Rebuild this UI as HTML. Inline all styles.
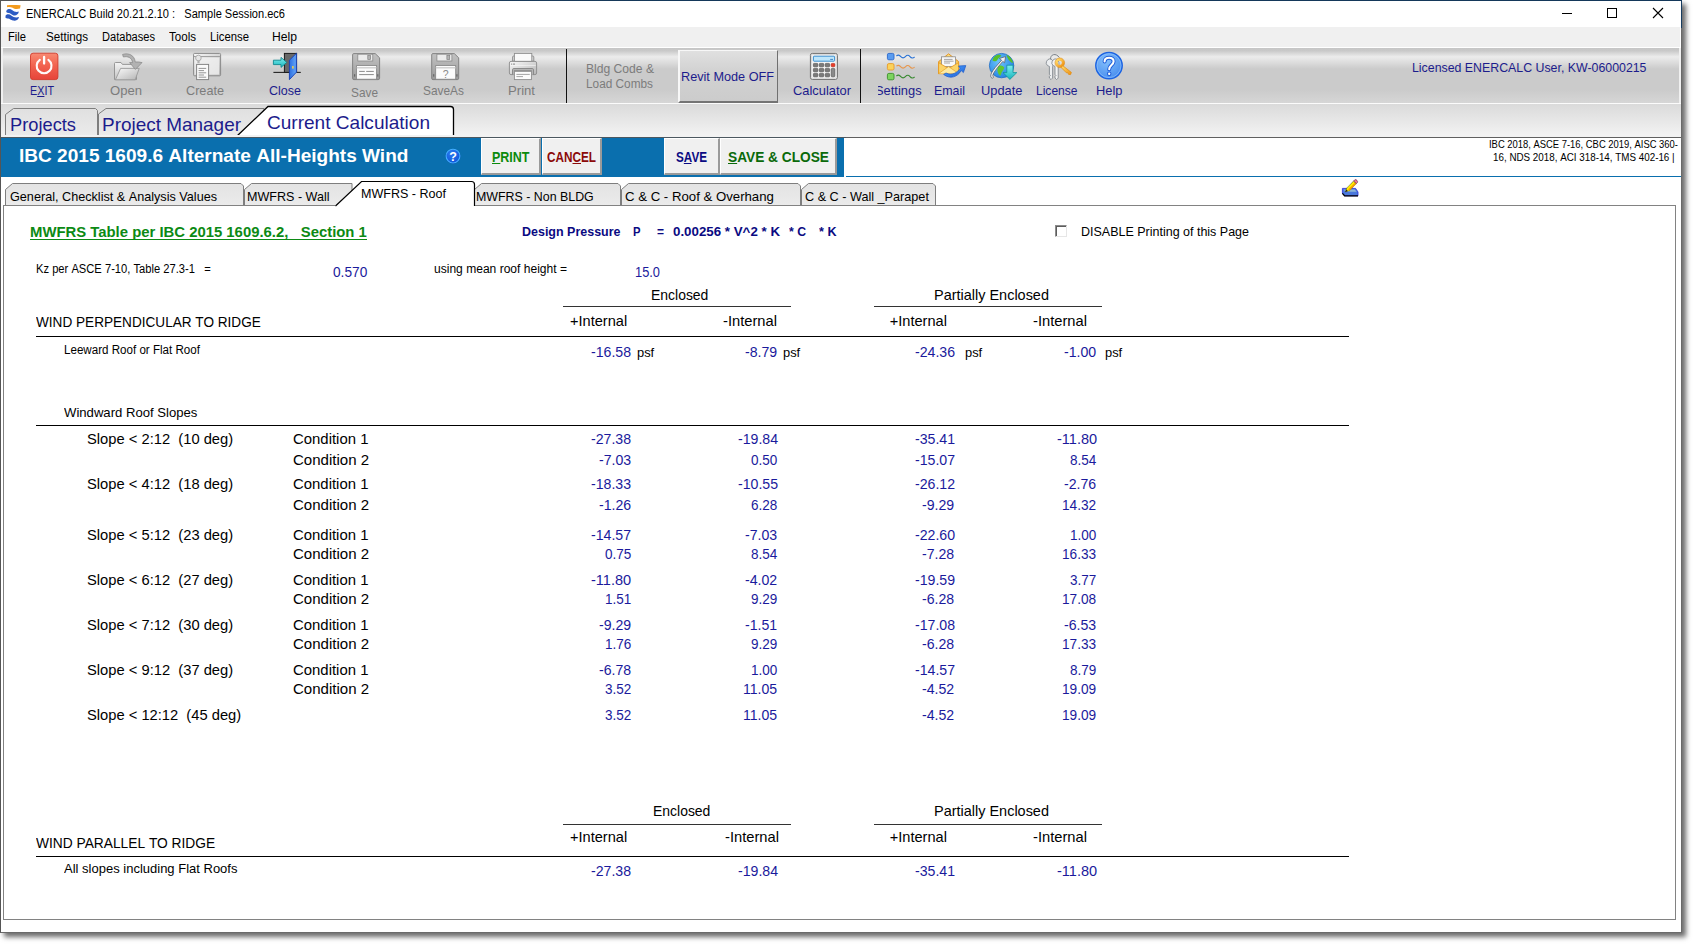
<!DOCTYPE html>
<html><head><meta charset="utf-8"><title>ENERCALC</title>
<style>
html,body{margin:0;padding:0;}
body{width:1697px;height:948px;overflow:hidden;background:#fff;position:relative;font-family:"Liberation Sans",sans-serif;}
.t{position:absolute;white-space:nowrap;line-height:1;transform-origin:0 50%;display:block;}
.t u{text-decoration:underline;text-underline-offset:1px;}
.b{position:absolute;box-sizing:border-box;}
svg{position:absolute;overflow:visible;}

</style></head>
<body>
<div class="b" style="left:0px;top:0px;width:1682px;height:933px;background:#fff;border:1px solid #555;border-right-color:#6a6a6a;border-bottom-color:#6a6a6a;box-shadow:4px 4px 5px rgba(0,0,0,.58);"></div>
<div class="b" style="left:1681px;top:0px;width:1px;height:28px;background:#163c60;"></div>
<div class="b" style="left:0;top:0;width:1682px;height:1px;background:linear-gradient(90deg,#555 0%,#2a4058 12%,#14385a 40%,#14385a 100%);"></div>
<span class="t" style="left:25.80px;top:7.75px;font-size:12.5px;color:#000;transform:scaleX(0.8833);">ENERCALC&nbsp;Build&nbsp;20.21.2.10&nbsp;:&nbsp;&nbsp;&nbsp;Sample&nbsp;Session.ec6</span>
<svg style="left:1555px;top:3px" width="120" height="22" viewBox="0 0 120 22"><path d="M7 10.5h10" stroke="#000" stroke-width="1" fill="none"/><rect x="52.5" y="5.5" width="9" height="9" stroke="#000" stroke-width="1" fill="none"/><path d="M98 5l10 10M108 5l-10 10" stroke="#000" stroke-width="1.1" fill="none"/></svg>
<div class="b" style="left:1px;top:27px;width:1679px;height:20px;background:#f0f0f0;"></div>
<div class="b" style="left:1px;top:47px;width:1680px;height:1px;background:#fff;"></div>
<span class="t" style="left:8.00px;top:30.75px;font-size:12.5px;color:#000;transform:scaleX(0.8936);">File</span>
<span class="t" style="left:46.00px;top:30.75px;font-size:12.5px;color:#000;transform:scaleX(0.9299);">Settings</span>
<span class="t" style="left:102.00px;top:30.75px;font-size:12.5px;color:#000;transform:scaleX(0.8869);">Databases</span>
<span class="t" style="left:169.00px;top:30.75px;font-size:12.5px;color:#000;transform:scaleX(0.9252);">Tools</span>
<span class="t" style="left:210.00px;top:30.75px;font-size:12.5px;color:#000;transform:scaleX(0.9052);">License</span>
<span class="t" style="left:272.00px;top:30.75px;font-size:12.5px;color:#000;transform:scaleX(0.9724);">Help</span>
<div class="b" style="left:1px;top:48px;width:1680px;height:55px;background:#f0f0f0;"></div>
<div class="b" style="left:3px;top:48px;width:1676px;height:55px;background:linear-gradient(#c6c6c6 0%,#c9c9c9 5%,#ececec 16%,#cbcbcb 38%,#cbcbcb 76%,#d6d6d6 100%);"></div>
<div class="b" style="left:1px;top:103px;width:1680px;height:1px;background:#fbfbfb;"></div>
<div class="b" style="left:1px;top:104px;width:1680px;height:33px;background:linear-gradient(#dadada,#f4f4f4);"></div>
<div class="b" style="left:1px;top:137px;width:1680px;height:1px;background:#606060;"></div>
<span class="t" style="left:30.00px;top:83.75px;font-size:13.5px;color:#1c1c8c;transform:scaleX(0.7998);">E<u>X</u>IT</span>
<span class="t" style="left:110.00px;top:83.75px;font-size:13.5px;color:#7c7c7c;transform:scaleX(0.9690);">Open</span>
<span class="t" style="left:186.00px;top:83.75px;font-size:13.5px;color:#7c7c7c;transform:scaleX(0.9378);">Create</span>
<span class="t" style="left:269.00px;top:83.75px;font-size:13.5px;color:#1c1c8c;transform:scaleX(0.9271);">Close</span>
<span class="t" style="left:351.00px;top:85.75px;font-size:13.5px;color:#7c7c7c;transform:scaleX(0.8774);">Save</span>
<span class="t" style="left:423.00px;top:83.75px;font-size:13.5px;color:#7c7c7c;transform:scaleX(0.8812);">SaveAs</span>
<span class="t" style="left:508.00px;top:83.75px;font-size:13.5px;color:#7c7c7c;transform:scaleX(0.9726);">Print</span>
<div class="b" style="left:566px;top:49px;width:1px;height:54px;background:#111;"></div>
<span class="t" style="left:586.00px;top:62.75px;font-size:12.5px;color:#7c7c7c;transform:scaleX(0.9688);">Bldg&nbsp;Code&nbsp;&amp;</span>
<span class="t" style="left:586.00px;top:77.75px;font-size:12.5px;color:#7c7c7c;transform:scaleX(0.9453);">Load&nbsp;Combs</span>
<div class="b" style="left:678px;top:50px;width:100px;height:53px;background:linear-gradient(#e0e0e0,#d2d2d2 40%,#cccccc);border-top:1px solid #f7f7f7;border-left:2px solid #f7f7f7;border-right:1px solid #707070;border-bottom:2px solid #747474;"></div>
<span class="t" style="left:681.00px;top:69.75px;font-size:13.5px;color:#1c1c8c;transform:scaleX(0.9392);">Revit&nbsp;Mode&nbsp;OFF</span>
<span class="t" style="left:793.00px;top:83.75px;font-size:13.5px;color:#1c1c8c;transform:scaleX(0.9543);">Calculator</span>
<div class="b" style="left:860px;top:49px;width:1px;height:54px;background:#111;"></div>
<div class="b" style="left:878px;top:82px;width:50px;height:20px;overflow:hidden;"><span class="t" style="left:-3px;top:2.2px;font-size:13.5px;color:#1c1c8c;transform:scaleX(0.955)">Settings</span></div>
<span class="t" style="left:934.00px;top:83.75px;font-size:13.5px;color:#1c1c8c;transform:scaleX(0.9183);">Email</span>
<span class="t" style="left:980.50px;top:83.75px;font-size:13.5px;color:#1c1c8c;transform:scaleX(0.9533);">Update</span>
<span class="t" style="left:1036.00px;top:83.75px;font-size:13.5px;color:#1c1c8c;transform:scaleX(0.8918);">License</span>
<span class="t" style="left:1095.50px;top:83.75px;font-size:13.5px;color:#1c1c8c;transform:scaleX(0.9544);">Help</span>
<span class="t" style="left:1412.00px;top:60.75px;font-size:13.5px;color:#1c1c8c;transform:scaleX(0.9146);">Licensed&nbsp;ENERCALC&nbsp;User,&nbsp;KW-06000215</span>
<svg style="left:0;top:104px" width="470" height="31" viewBox="0 104 470 31"><defs><linearGradient id="tg" x1="0" y1="0" x2="0" y2="1"><stop offset="0" stop-color="#e0e0e0"/><stop offset="1" stop-color="#ebebeb"/></linearGradient></defs><path d="M5.5 136V114.500L13.500 108.500H95.500L97.500 110.500V136" fill="url(#tg)" stroke="#7e7e7e" stroke-width="1"/><path d="M98.500 136V114L106 108.500H264V136" fill="url(#tg)" stroke="#7e7e7e" stroke-width="1"/><path d="M237 136L268 106.500H450.500Q453.500 106.500 453.500 109.500V136Z" fill="#fff" stroke="none"/><path d="M237 136L268 106.500H450.500Q453.500 106.500 453.500 109.500V136" fill="none" stroke="#000" stroke-width="1.300"/></svg>
<div class="b" style="left:0;top:104px;width:470px;height:31px;overflow:hidden;">
<span class="t" style="left:10.00px;top:11.75px;font-size:18.5px;color:#1c1c8c;transform:scaleX(0.9876);">Projects</span>
<span class="t" style="left:102.00px;top:11.75px;font-size:18.5px;color:#1c1c8c;transform:scaleX(1.0240);">Project&nbsp;Manager</span>
<span class="t" style="left:266.50px;top:9.75px;font-size:18.5px;color:#1c1c8c;transform:scaleX(1.0293);">Current&nbsp;Calculation</span>
</div>
<div class="b" style="left:1px;top:135px;width:1680px;height:2px;background:#f2f2f2;"></div>
<div class="b" style="left:1px;top:138px;width:843px;height:39px;background:#0a6fae;"></div>
<div class="b" style="left:1px;top:137px;width:845px;height:1px;background:#4c5860;"></div>
<div class="b" style="left:846px;top:176px;width:835px;height:1px;background:#0a6fae;"></div>
<span class="t" style="left:19.00px;top:148.25px;font-size:17.5px;color:#fff;font-weight:bold;transform:scaleX(1.0886);">IBC&nbsp;2015&nbsp;1609.6&nbsp;Alternate&nbsp;All-Heights&nbsp;Wind</span>
<svg style="left:444px;top:147px" width="18" height="18" viewBox="0 0 18 18"><defs><radialGradient id="hq" cx="0.4" cy="0.3" r="0.8"><stop offset="0" stop-color="#2a7cf0"/><stop offset="1" stop-color="#0c50d8"/></radialGradient></defs><circle cx="9" cy="9.4" r="7.3" fill="#0a2fb0"/><circle cx="9" cy="9.1" r="6.9" fill="url(#hq)" stroke="#44b2ff" stroke-width="1.1"/><text x="9" y="13.6" font-family="Liberation Sans" font-weight="bold" font-size="12.5" fill="#fff" text-anchor="middle">?</text></svg>
<div class="b" style="left:481px;top:138px;width:59.5px;height:37px;background:#f0f0f0;border-top:1px solid #fff;border-left:1px solid #fff;border-right:2px solid #9a9a9a;border-bottom:2px solid #9a9a9a;"></div>
<span class="t" style="left:492.00px;top:150.30px;font-size:14px;color:#0c8a0c;font-weight:bold;transform:scaleX(0.8928);"><u>P</u>RINT</span>
<div class="b" style="left:542px;top:138px;width:60px;height:37px;background:#f0f0f0;border-top:1px solid #fff;border-left:1px solid #fff;border-right:2px solid #9a9a9a;border-bottom:2px solid #9a9a9a;"></div>
<span class="t" style="left:547.00px;top:150.30px;font-size:14px;color:#8c0a0a;font-weight:bold;transform:scaleX(0.8400);">CAN<u>C</u>EL</span>
<div class="b" style="left:664px;top:138px;width:55.5px;height:37px;background:#f0f0f0;border-top:1px solid #fff;border-left:1px solid #fff;border-right:2px solid #9a9a9a;border-bottom:2px solid #9a9a9a;"></div>
<span class="t" style="left:676.00px;top:150.30px;font-size:14px;color:#0a0a82;font-weight:bold;transform:scaleX(0.8359);">S<u>A</u>VE</span>
<div class="b" style="left:720px;top:138px;width:117px;height:37px;background:#f0f0f0;border-top:1px solid #fff;border-left:1px solid #fff;border-right:2px solid #9a9a9a;border-bottom:2px solid #9a9a9a;"></div>
<span class="t" style="left:728.00px;top:150.30px;font-size:14px;color:#0a6a0a;font-weight:bold;transform:scaleX(0.9786);"><u>S</u>AVE&nbsp;&amp;&nbsp;CLOSE</span>
<span class="t" style="left:1489.00px;top:138.70px;font-size:10.6px;color:#000;transform:scaleX(0.8887);">IBC&nbsp;2018,&nbsp;ASCE&nbsp;7-16,&nbsp;CBC&nbsp;2019,&nbsp;AISC&nbsp;360-</span>
<span class="t" style="left:1492.50px;top:151.70px;font-size:10.6px;color:#000;transform:scaleX(0.9271);">16,&nbsp;NDS&nbsp;2018,&nbsp;ACI&nbsp;318-14,&nbsp;TMS&nbsp;402-16&nbsp;|</span>
<svg style="left:0;top:178px" width="960" height="28" viewBox="0 178 960 28"><defs><linearGradient id="sg" x1="0" y1="0" x2="0" y2="1"><stop offset="0" stop-color="#e3e3e3"/><stop offset="1" stop-color="#ebebeb"/></linearGradient></defs><path d="M5.5 206V189.500L12.5 183.500H241.0L243.5 186V206" fill="url(#sg)" stroke="#7e7e7e"/><path d="M244.5 206V189.500L251.5 183.500H352V206" fill="url(#sg)" stroke="#7e7e7e"/><path d="M474.5 206V189.500L481.5 183.500H618.0L620.5 186V206" fill="url(#sg)" stroke="#7e7e7e"/><path d="M621.5 206V189.500L628.5 183.500H798.0L800.5 186V206" fill="url(#sg)" stroke="#7e7e7e"/><path d="M801.5 206V189.500L808.5 183.500H933.0L935.5 186V206" fill="url(#sg)" stroke="#7e7e7e"/><path d="M335.500 206.500L361.500 181.500H471.500Q474.500 181.500 474.500 184.500V206.500Z" fill="#fff"/><path d="M335.500 206L361.500 181.500H471.500Q474.500 181.500 474.500 184.500V206" fill="none" stroke="#000" stroke-width="1.200"/></svg>
<span class="t" style="left:9.70px;top:190.80px;font-size:12.4px;color:#000;transform:scaleX(1.0203);">General,&nbsp;Checklist&nbsp;&amp;&nbsp;Analysis&nbsp;Values</span>
<span class="t" style="left:247.30px;top:190.80px;font-size:12.4px;color:#000;transform:scaleX(1.0134);">MWFRS&nbsp;-&nbsp;Wall</span>
<span class="t" style="left:360.50px;top:188.30px;font-size:12.4px;color:#000;transform:scaleX(1.0113);">MWFRS&nbsp;-&nbsp;Roof</span>
<span class="t" style="left:476.00px;top:190.80px;font-size:12.4px;color:#000;">MWFRS&nbsp;-&nbsp;Non&nbsp;BLDG</span>
<span class="t" style="left:624.50px;top:190.80px;font-size:12.4px;color:#000;transform:scaleX(1.0650);">C&nbsp;&amp;&nbsp;C&nbsp;-&nbsp;Roof&nbsp;&amp;&nbsp;Overhang</span>
<span class="t" style="left:804.50px;top:190.80px;font-size:12.4px;color:#000;transform:scaleX(1.0205);">C&nbsp;&amp;&nbsp;C&nbsp;-&nbsp;Wall&nbsp;_Parapet</span>
<div class="b" style="left:3px;top:205px;width:1673px;height:715px;border:1px solid #828282;border-top:none;background:transparent;"></div>
<div class="b" style="left:3px;top:205px;width:332px;height:1px;background:#828282;"></div>
<div class="b" style="left:475px;top:205px;width:1201px;height:1px;background:#828282;"></div>
<span class="t" style="left:29.50px;top:225.20px;font-size:14.6px;color:#0c8a14;font-weight:bold;transform:scaleX(1.0188);">MWFRS&nbsp;Table&nbsp;per&nbsp;IBC&nbsp;2015&nbsp;1609.6.2,&nbsp;&nbsp;&nbsp;Section&nbsp;1</span>
<div class="b" style="left:29.5px;top:239px;width:337.0px;height:1px;background:#0c8a14;"></div>
<span class="t" style="left:521.50px;top:224.50px;font-size:13px;color:#0a0a82;font-weight:bold;transform:scaleX(0.9600);">Design&nbsp;Pressure</span>
<span class="t" style="left:633.00px;top:224.50px;font-size:13px;color:#0a0a82;font-weight:bold;transform:scaleX(0.8649);">P</span>
<span class="t" style="left:657.00px;top:224.50px;font-size:13px;color:#0a0a82;font-weight:bold;transform:scaleX(0.9220);">=</span>
<span class="t" style="left:673.00px;top:224.50px;font-size:13px;color:#0a0a82;font-weight:bold;transform:scaleX(1.0245);">0.00256&nbsp;*&nbsp;V^2&nbsp;*&nbsp;K</span>
<span class="t" style="left:789.00px;top:224.50px;font-size:13px;color:#0a0a82;font-weight:bold;transform:scaleX(0.9414);">*&nbsp;C</span>
<span class="t" style="left:818.50px;top:224.50px;font-size:13px;color:#0a0a82;font-weight:bold;transform:scaleX(0.9691);">*&nbsp;K</span>
<div class="b" style="left:1055px;top:225px;width:12px;height:12px;background:#fff;border-top:1px solid #8c8c8c;border-left:1px solid #8c8c8c;border-right:1px solid #e6e6e6;border-bottom:1px solid #e6e6e6;"></div>
<div class="b" style="left:1056px;top:226px;width:10px;height:10px;border-top:1px solid #5c5c5c;border-left:1px solid #5c5c5c;"></div>
<span class="t" style="left:1081.00px;top:225.00px;font-size:13px;color:#000;transform:scaleX(0.9607);">DISABLE&nbsp;Printing&nbsp;of&nbsp;this&nbsp;Page</span>
<span class="t" style="left:36.00px;top:263.00px;font-size:12px;color:#000;transform:scaleX(0.9310);">Kz&nbsp;per&nbsp;ASCE&nbsp;7-10,&nbsp;Table&nbsp;27.3-1&nbsp;&nbsp;&nbsp;=</span>
<span class="t" style="left:332.50px;top:264.50px;font-size:14.6px;color:#1a1a9c;transform:scaleX(0.9388);">0.570</span>
<span class="t" style="left:433.50px;top:263.00px;font-size:12px;color:#000;transform:scaleX(1.0043);">using&nbsp;mean&nbsp;roof&nbsp;height&nbsp;=</span>
<span class="t" style="left:634.50px;top:264.50px;font-size:14.6px;color:#1a1a9c;transform:scaleX(0.8798);">15.0</span>
<span class="t" style="left:650.50px;top:287.70px;font-size:14.6px;color:#000;transform:scaleX(0.9557);">Enclosed</span>
<span class="t" style="left:933.50px;top:287.70px;font-size:14.6px;color:#000;transform:scaleX(0.9910);">Partially&nbsp;Enclosed</span>
<div class="b" style="left:563px;top:306px;width:228px;height:1px;background:#333;"></div>
<div class="b" style="left:874px;top:306px;width:228px;height:1px;background:#333;"></div>
<span class="t" style="left:570.00px;top:313.70px;font-size:14.6px;color:#000;">+Internal</span>
<span class="t" style="left:723.00px;top:313.70px;font-size:14.6px;color:#000;transform:scaleX(1.0082);">-Internal</span>
<span class="t" style="left:889.70px;top:313.70px;font-size:14.6px;color:#000;">+Internal</span>
<span class="t" style="left:1033.00px;top:313.70px;font-size:14.6px;color:#000;transform:scaleX(1.0082);">-Internal</span>
<span class="t" style="left:36.00px;top:315.20px;font-size:14.6px;color:#000;transform:scaleX(0.9315);">WIND&nbsp;PERPENDICULAR&nbsp;TO&nbsp;RIDGE</span>
<div class="b" style="left:36px;top:336px;width:1313px;height:1px;background:#000;"></div>
<span class="t" style="left:64.00px;top:343.80px;font-size:12px;color:#000;transform:scaleX(0.9663);">Leeward&nbsp;Roof&nbsp;or&nbsp;Flat&nbsp;Roof</span>
<span class="t" style="left:590.70px;top:345.20px;font-size:14.6px;color:#1a1a9c;transform:scaleX(0.9686);">-16.58</span>
<span class="t" style="left:745.40px;top:345.20px;font-size:14.6px;color:#1a1a9c;transform:scaleX(0.9676);">-8.79</span>
<span class="t" style="left:914.50px;top:345.20px;font-size:14.6px;color:#1a1a9c;transform:scaleX(0.9686);">-24.36</span>
<span class="t" style="left:1064.40px;top:345.20px;font-size:14.6px;color:#1a1a9c;transform:scaleX(0.9676);">-1.00</span>
<span class="t" style="left:636.50px;top:347.20px;font-size:12.6px;color:#000;transform:scaleX(1.0233);">psf</span>
<span class="t" style="left:783.00px;top:347.20px;font-size:12.6px;color:#000;transform:scaleX(1.0233);">psf</span>
<span class="t" style="left:964.50px;top:347.20px;font-size:12.6px;color:#000;transform:scaleX(1.0233);">psf</span>
<span class="t" style="left:1104.50px;top:347.20px;font-size:12.6px;color:#000;transform:scaleX(1.0233);">psf</span>
<span class="t" style="left:64.00px;top:407.30px;font-size:12.4px;color:#000;transform:scaleX(1.0584);">Windward&nbsp;Roof&nbsp;Slopes</span>
<div class="b" style="left:36px;top:425px;width:1313px;height:1px;background:#000;"></div>
<span class="t" style="left:87.00px;top:431.90px;font-size:14.6px;color:#000;transform:scaleX(1.0090);">Slope&nbsp;&lt;&nbsp;2:12&nbsp;&nbsp;(10&nbsp;deg)</span>
<span class="t" style="left:293.20px;top:431.90px;font-size:14.6px;color:#000;transform:scaleX(1.0221);">Condition&nbsp;1</span>
<span class="t" style="left:590.70px;top:431.90px;font-size:14.6px;color:#1a1a9c;transform:scaleX(0.9686);">-27.38</span>
<span class="t" style="left:737.50px;top:431.90px;font-size:14.6px;color:#1a1a9c;transform:scaleX(0.9686);">-19.84</span>
<span class="t" style="left:914.50px;top:431.90px;font-size:14.6px;color:#1a1a9c;transform:scaleX(0.9686);">-35.41</span>
<span class="t" style="left:1056.50px;top:431.90px;font-size:14.6px;color:#1a1a9c;transform:scaleX(0.9947);">-11.80</span>
<span class="t" style="left:293.20px;top:452.90px;font-size:14.6px;color:#000;transform:scaleX(1.0316);">Condition&nbsp;2</span>
<span class="t" style="left:598.60px;top:452.90px;font-size:14.6px;color:#1a1a9c;transform:scaleX(0.9676);">-7.03</span>
<span class="t" style="left:751.30px;top:452.90px;font-size:14.6px;color:#1a1a9c;transform:scaleX(0.9255);">0.50</span>
<span class="t" style="left:914.50px;top:452.90px;font-size:14.6px;color:#1a1a9c;transform:scaleX(0.9686);">-15.07</span>
<span class="t" style="left:1070.30px;top:452.90px;font-size:14.6px;color:#1a1a9c;transform:scaleX(0.9255);">8.54</span>
<span class="t" style="left:87.00px;top:476.90px;font-size:14.6px;color:#000;transform:scaleX(1.0090);">Slope&nbsp;&lt;&nbsp;4:12&nbsp;&nbsp;(18&nbsp;deg)</span>
<span class="t" style="left:293.20px;top:476.90px;font-size:14.6px;color:#000;transform:scaleX(1.0221);">Condition&nbsp;1</span>
<span class="t" style="left:590.70px;top:476.90px;font-size:14.6px;color:#1a1a9c;transform:scaleX(0.9686);">-18.33</span>
<span class="t" style="left:737.50px;top:476.90px;font-size:14.6px;color:#1a1a9c;transform:scaleX(0.9686);">-10.55</span>
<span class="t" style="left:914.50px;top:476.90px;font-size:14.6px;color:#1a1a9c;transform:scaleX(0.9686);">-26.12</span>
<span class="t" style="left:1064.40px;top:476.90px;font-size:14.6px;color:#1a1a9c;transform:scaleX(0.9676);">-2.76</span>
<span class="t" style="left:293.20px;top:497.90px;font-size:14.6px;color:#000;transform:scaleX(1.0316);">Condition&nbsp;2</span>
<span class="t" style="left:598.60px;top:497.90px;font-size:14.6px;color:#1a1a9c;transform:scaleX(0.9676);">-1.26</span>
<span class="t" style="left:751.30px;top:497.90px;font-size:14.6px;color:#1a1a9c;transform:scaleX(0.9255);">6.28</span>
<span class="t" style="left:922.40px;top:497.90px;font-size:14.6px;color:#1a1a9c;transform:scaleX(0.9676);">-9.29</span>
<span class="t" style="left:1062.40px;top:497.90px;font-size:14.6px;color:#1a1a9c;transform:scaleX(0.9361);">14.32</span>
<span class="t" style="left:87.00px;top:527.90px;font-size:14.6px;color:#000;transform:scaleX(1.0090);">Slope&nbsp;&lt;&nbsp;5:12&nbsp;&nbsp;(23&nbsp;deg)</span>
<span class="t" style="left:293.20px;top:527.90px;font-size:14.6px;color:#000;transform:scaleX(1.0221);">Condition&nbsp;1</span>
<span class="t" style="left:590.70px;top:527.90px;font-size:14.6px;color:#1a1a9c;transform:scaleX(0.9686);">-14.57</span>
<span class="t" style="left:745.40px;top:527.90px;font-size:14.6px;color:#1a1a9c;transform:scaleX(0.9676);">-7.03</span>
<span class="t" style="left:914.50px;top:527.90px;font-size:14.6px;color:#1a1a9c;transform:scaleX(0.9686);">-22.60</span>
<span class="t" style="left:1070.30px;top:527.90px;font-size:14.6px;color:#1a1a9c;transform:scaleX(0.9255);">1.00</span>
<span class="t" style="left:293.20px;top:546.70px;font-size:14.6px;color:#000;transform:scaleX(1.0316);">Condition&nbsp;2</span>
<span class="t" style="left:604.50px;top:546.70px;font-size:14.6px;color:#1a1a9c;transform:scaleX(0.9255);">0.75</span>
<span class="t" style="left:751.30px;top:546.70px;font-size:14.6px;color:#1a1a9c;transform:scaleX(0.9255);">8.54</span>
<span class="t" style="left:922.40px;top:546.70px;font-size:14.6px;color:#1a1a9c;transform:scaleX(0.9676);">-7.28</span>
<span class="t" style="left:1062.40px;top:546.70px;font-size:14.6px;color:#1a1a9c;transform:scaleX(0.9361);">16.33</span>
<span class="t" style="left:87.00px;top:572.90px;font-size:14.6px;color:#000;transform:scaleX(1.0090);">Slope&nbsp;&lt;&nbsp;6:12&nbsp;&nbsp;(27&nbsp;deg)</span>
<span class="t" style="left:293.20px;top:572.90px;font-size:14.6px;color:#000;transform:scaleX(1.0221);">Condition&nbsp;1</span>
<span class="t" style="left:590.70px;top:572.90px;font-size:14.6px;color:#1a1a9c;transform:scaleX(0.9947);">-11.80</span>
<span class="t" style="left:745.40px;top:572.90px;font-size:14.6px;color:#1a1a9c;transform:scaleX(0.9676);">-4.02</span>
<span class="t" style="left:914.50px;top:572.90px;font-size:14.6px;color:#1a1a9c;transform:scaleX(0.9686);">-19.59</span>
<span class="t" style="left:1070.30px;top:572.90px;font-size:14.6px;color:#1a1a9c;transform:scaleX(0.9255);">3.77</span>
<span class="t" style="left:293.20px;top:591.70px;font-size:14.6px;color:#000;transform:scaleX(1.0316);">Condition&nbsp;2</span>
<span class="t" style="left:604.50px;top:591.70px;font-size:14.6px;color:#1a1a9c;transform:scaleX(0.9255);">1.51</span>
<span class="t" style="left:751.30px;top:591.70px;font-size:14.6px;color:#1a1a9c;transform:scaleX(0.9255);">9.29</span>
<span class="t" style="left:922.40px;top:591.70px;font-size:14.6px;color:#1a1a9c;transform:scaleX(0.9676);">-6.28</span>
<span class="t" style="left:1062.40px;top:591.70px;font-size:14.6px;color:#1a1a9c;transform:scaleX(0.9361);">17.08</span>
<span class="t" style="left:87.00px;top:617.90px;font-size:14.6px;color:#000;transform:scaleX(1.0090);">Slope&nbsp;&lt;&nbsp;7:12&nbsp;&nbsp;(30&nbsp;deg)</span>
<span class="t" style="left:293.20px;top:617.90px;font-size:14.6px;color:#000;transform:scaleX(1.0221);">Condition&nbsp;1</span>
<span class="t" style="left:598.60px;top:617.90px;font-size:14.6px;color:#1a1a9c;transform:scaleX(0.9676);">-9.29</span>
<span class="t" style="left:745.40px;top:617.90px;font-size:14.6px;color:#1a1a9c;transform:scaleX(0.9676);">-1.51</span>
<span class="t" style="left:914.50px;top:617.90px;font-size:14.6px;color:#1a1a9c;transform:scaleX(0.9686);">-17.08</span>
<span class="t" style="left:1064.40px;top:617.90px;font-size:14.6px;color:#1a1a9c;transform:scaleX(0.9676);">-6.53</span>
<span class="t" style="left:293.20px;top:636.70px;font-size:14.6px;color:#000;transform:scaleX(1.0316);">Condition&nbsp;2</span>
<span class="t" style="left:604.50px;top:636.70px;font-size:14.6px;color:#1a1a9c;transform:scaleX(0.9255);">1.76</span>
<span class="t" style="left:751.30px;top:636.70px;font-size:14.6px;color:#1a1a9c;transform:scaleX(0.9255);">9.29</span>
<span class="t" style="left:922.40px;top:636.70px;font-size:14.6px;color:#1a1a9c;transform:scaleX(0.9676);">-6.28</span>
<span class="t" style="left:1062.40px;top:636.70px;font-size:14.6px;color:#1a1a9c;transform:scaleX(0.9361);">17.33</span>
<span class="t" style="left:87.00px;top:662.90px;font-size:14.6px;color:#000;transform:scaleX(1.0090);">Slope&nbsp;&lt;&nbsp;9:12&nbsp;&nbsp;(37&nbsp;deg)</span>
<span class="t" style="left:293.20px;top:662.90px;font-size:14.6px;color:#000;transform:scaleX(1.0221);">Condition&nbsp;1</span>
<span class="t" style="left:598.60px;top:662.90px;font-size:14.6px;color:#1a1a9c;transform:scaleX(0.9676);">-6.78</span>
<span class="t" style="left:751.30px;top:662.90px;font-size:14.6px;color:#1a1a9c;transform:scaleX(0.9255);">1.00</span>
<span class="t" style="left:914.50px;top:662.90px;font-size:14.6px;color:#1a1a9c;transform:scaleX(0.9686);">-14.57</span>
<span class="t" style="left:1070.30px;top:662.90px;font-size:14.6px;color:#1a1a9c;transform:scaleX(0.9255);">8.79</span>
<span class="t" style="left:293.20px;top:681.70px;font-size:14.6px;color:#000;transform:scaleX(1.0316);">Condition&nbsp;2</span>
<span class="t" style="left:604.50px;top:681.70px;font-size:14.6px;color:#1a1a9c;transform:scaleX(0.9255);">3.52</span>
<span class="t" style="left:743.40px;top:681.70px;font-size:14.6px;color:#1a1a9c;transform:scaleX(0.9647);">11.05</span>
<span class="t" style="left:922.40px;top:681.70px;font-size:14.6px;color:#1a1a9c;transform:scaleX(0.9676);">-4.52</span>
<span class="t" style="left:1062.40px;top:681.70px;font-size:14.6px;color:#1a1a9c;transform:scaleX(0.9361);">19.09</span>
<span class="t" style="left:87.00px;top:707.90px;font-size:14.6px;color:#000;transform:scaleX(1.0078);">Slope&nbsp;&lt;&nbsp;12:12&nbsp;&nbsp;(45&nbsp;deg)</span>
<span class="t" style="left:604.50px;top:707.90px;font-size:14.6px;color:#1a1a9c;transform:scaleX(0.9255);">3.52</span>
<span class="t" style="left:743.40px;top:707.90px;font-size:14.6px;color:#1a1a9c;transform:scaleX(0.9647);">11.05</span>
<span class="t" style="left:922.40px;top:707.90px;font-size:14.6px;color:#1a1a9c;transform:scaleX(0.9676);">-4.52</span>
<span class="t" style="left:1062.40px;top:707.90px;font-size:14.6px;color:#1a1a9c;transform:scaleX(0.9361);">19.09</span>
<span class="t" style="left:652.70px;top:803.70px;font-size:14.6px;color:#000;transform:scaleX(0.9557);">Enclosed</span>
<span class="t" style="left:933.50px;top:803.70px;font-size:14.6px;color:#000;transform:scaleX(0.9910);">Partially&nbsp;Enclosed</span>
<div class="b" style="left:563px;top:824px;width:228px;height:1px;background:#333;"></div>
<div class="b" style="left:874px;top:824px;width:228px;height:1px;background:#333;"></div>
<span class="t" style="left:570.00px;top:829.70px;font-size:14.6px;color:#000;">+Internal</span>
<span class="t" style="left:725.00px;top:829.70px;font-size:14.6px;color:#000;transform:scaleX(1.0082);">-Internal</span>
<span class="t" style="left:889.70px;top:829.70px;font-size:14.6px;color:#000;">+Internal</span>
<span class="t" style="left:1033.00px;top:829.70px;font-size:14.6px;color:#000;transform:scaleX(1.0082);">-Internal</span>
<span class="t" style="left:36.00px;top:836.20px;font-size:14.6px;color:#000;transform:scaleX(0.9429);">WIND&nbsp;PARALLEL&nbsp;TO&nbsp;RIDGE</span>
<div class="b" style="left:36px;top:856px;width:1313px;height:1px;background:#000;"></div>
<span class="t" style="left:64.00px;top:863.10px;font-size:12.8px;color:#000;transform:scaleX(1.0161);">All&nbsp;slopes&nbsp;including&nbsp;Flat&nbsp;Roofs</span>
<span class="t" style="left:590.70px;top:863.70px;font-size:14.6px;color:#1a1a9c;transform:scaleX(0.9686);">-27.38</span>
<span class="t" style="left:737.50px;top:863.70px;font-size:14.6px;color:#1a1a9c;transform:scaleX(0.9686);">-19.84</span>
<span class="t" style="left:914.50px;top:863.70px;font-size:14.6px;color:#1a1a9c;transform:scaleX(0.9686);">-35.41</span>
<span class="t" style="left:1056.50px;top:863.70px;font-size:14.6px;color:#1a1a9c;transform:scaleX(0.9947);">-11.80</span>
<svg style="left:0;top:0" width="1697" height="210" viewBox="0 0 1697 210"><defs><linearGradient id="gEx" x1="0" y1="0" x2="0" y2="1"><stop offset="0" stop-color="#f88a72"/><stop offset="0.45" stop-color="#f26450"/><stop offset="1" stop-color="#e6443a"/></linearGradient><linearGradient id="gGr" x1="0" y1="0" x2="0" y2="1"><stop offset="0" stop-color="#f4f4f4"/><stop offset="1" stop-color="#c4c4c4"/></linearGradient><linearGradient id="gGr2" x1="0" y1="0" x2="1" y2="1"><stop offset="0" stop-color="#fafafa"/><stop offset="1" stop-color="#b4b4b4"/></linearGradient><linearGradient id="gDoor" x1="0" y1="0" x2="1" y2="0"><stop offset="0" stop-color="#2d6fe0"/><stop offset="1" stop-color="#66a8f8"/></linearGradient><linearGradient id="gTeal" x1="0" y1="0" x2="0" y2="1"><stop offset="0" stop-color="#7ff0f0"/><stop offset="1" stop-color="#18b4bc"/></linearGradient><linearGradient id="gFl" x1="0" y1="0" x2="0" y2="1"><stop offset="0" stop-color="#c2c2c2"/><stop offset="1" stop-color="#9a9a9a"/></linearGradient><radialGradient id="gHelp" cx="0.4" cy="0.3" r="0.8"><stop offset="0" stop-color="#84c0fc"/><stop offset="1" stop-color="#4288ec"/></radialGradient><radialGradient id="gGlobe" cx="0.4" cy="0.35" r="0.75"><stop offset="0" stop-color="#6cc4fc"/><stop offset="1" stop-color="#1c7ce0"/></radialGradient><linearGradient id="gEnv" x1="0" y1="0" x2="0" y2="1"><stop offset="0" stop-color="#fde27c"/><stop offset="1" stop-color="#f2a22c"/></linearGradient><linearGradient id="gBlueA" x1="0" y1="0" x2="1" y2="1"><stop offset="0" stop-color="#5ab0ff"/><stop offset="1" stop-color="#1458d8"/></linearGradient><linearGradient id="gGold" x1="0" y1="0" x2="1" y2="1"><stop offset="0" stop-color="#ffe070"/><stop offset="1" stop-color="#f09010"/></linearGradient></defs><path d="M7 5.2C11 4.6 16 5 20.6 5.2L20 8.6C17 9.4 14 9 12.6 7.8C11 7 9 7 7 7.2Z" fill="#f39a1c"/><path d="M6.5 10.5C8 8.6 10.5 8.6 12 10C14 12 17 12.2 18.8 11.6C18.6 14.4 16 16 13.6 15.4C11.6 14.8 10.4 13 8.6 13C7.6 13 6.8 12.6 6.2 12Z" fill="#2c5cc4"/><path d="M5.6 15.6C7 13.8 9.6 14 11.2 15.6C13.4 17.6 16.6 17.8 19 17C18.8 19.8 15.6 21.2 13 20.6C10.8 20 9.8 18.4 8 18.4C7 18.4 6 18 5.4 17.4Z" fill="#2a58c0"/><rect x="30.5" y="53.2" width="27.4" height="26.4" rx="2.6" fill="url(#gEx)" stroke="#d23a2a" stroke-width="0.9"/><path d="M39.8 59.8A7.4 7.4 0 1 0 48.4 59.8" fill="none" stroke="#fff" stroke-width="2.1" stroke-linecap="round" opacity="0.97"/><path d="M44.1 57V63.6" stroke="#fff" stroke-width="2.3" stroke-linecap="round"/><path d="M114.5 63.5Q114.5 62.5 115.5 62.5H121L122.4 64.4H136.5V79.6H114.5Z" fill="url(#gGr)" stroke="#8e8e8e" stroke-width="0.9"/><path d="M120.6 68.4H139.2L135.2 79.8H115.4Z" fill="url(#gGr2)" stroke="#9a9a9a" stroke-width="0.9"/><path d="M122.6 54.4C129 52.6 134.6 55.4 135.2 62H138.6V62L142 62.6L135.4 69.4L129.6 62.6H132.6C132 58 128 55.8 123.4 57Z" fill="#b2b2b2" stroke="#8c8c8c" stroke-width="0.8"/><rect x="193.6" y="53.4" width="27" height="22.4" rx="1" fill="url(#gGr2)" stroke="#8a8a8a" stroke-width="1"/><path d="M194 56.6H220.4" stroke="#9a9a9a" stroke-width="1"/><rect x="195.4" y="57.6" width="23.6" height="17" fill="#f0f0f0" opacity="0.8"/><circle cx="198.4" cy="58" r="2.8" fill="#e6e6e6" stroke="#a0a0a0" stroke-width="0.8"/><rect x="197.4" y="60.6" width="2.2" height="2.6" fill="#b0b0b0"/><rect x="196.6" y="64.4" width="12" height="15.2" fill="#fafafa" stroke="#858585" stroke-width="1"/><path d="M198.6 68.4H206.2M198.6 70.6H204M198.6 72.8H206.2M198.6 75H204M198.6 77.2H206.2" stroke="#8a8a8a" stroke-width="0.9"/><path d="M273.4 72.4H300.8" stroke="#222" stroke-width="1.1"/><rect x="284.4" y="53.4" width="12.2" height="19" fill="#686868" stroke="#1c1c1c" stroke-width="1"/><path d="M296.4 53.4L289.4 60.2V79.6L296.4 72.2Z" fill="url(#gDoor)" stroke="#1c46b8" stroke-width="1"/><rect x="292.2" y="66" width="1.4" height="2.6" fill="#ffd83c"/><path d="M273.4 60.2H281V57.4L286.8 62.4L281 67.4V64.6H273.4Z" fill="url(#gTeal)" stroke="#0e8890" stroke-width="0.9"/><g transform="translate(352.2,53.2)"><path d="M1.6 0.4H23L27.4 4.6V25Q27.4 26.4 26 26.4H1.6Q0.4 26.4 0.4 25V1.6Q0.4 0.4 1.6 0.4Z" fill="url(#gFl)" stroke="#7c7c7c" stroke-width="0.9"/><rect x="5.6" y="1" width="15" height="6.8" fill="#ececec" stroke="#8a8a8a" stroke-width="0.8"/><rect x="15.6" y="2.4" width="2.8" height="3.8" fill="#b4b4b4" stroke="#808080" stroke-width="0.7"/><rect x="4.4" y="12.4" width="20" height="13.6" fill="#fbfbfb" stroke="#848484" stroke-width="0.8"/><path d="M4.4 14.6H24.4" stroke="#c8c8c8" stroke-width="1.2"/><rect x="1.8" y="21" width="1.2" height="2.4" fill="#666"/><rect x="25" y="21" width="1.2" height="2.4" fill="#666"/><path d="M7 18.2H12.6M14 18.2H21.6M7 21.4H21.6" stroke="#8a8a8a" stroke-width="1"/></g><g transform="translate(431.3,53.2)"><path d="M1.6 0.4H23L27.4 4.6V25Q27.4 26.4 26 26.4H1.6Q0.4 26.4 0.4 25V1.6Q0.4 0.4 1.6 0.4Z" fill="url(#gFl)" stroke="#7c7c7c" stroke-width="0.9"/><rect x="5.6" y="1" width="15" height="6.8" fill="#ececec" stroke="#8a8a8a" stroke-width="0.8"/><rect x="15.6" y="2.4" width="2.8" height="3.8" fill="#b4b4b4" stroke="#808080" stroke-width="0.7"/><rect x="4.4" y="12.4" width="20" height="13.6" fill="#fbfbfb" stroke="#848484" stroke-width="0.8"/><path d="M4.4 14.6H24.4" stroke="#c8c8c8" stroke-width="1.2"/><rect x="1.8" y="21" width="1.2" height="2.4" fill="#666"/><rect x="25" y="21" width="1.2" height="2.4" fill="#666"/><text x="14.4" y="24.6" font-family="Liberation Sans" font-size="10.5" fill="#8a8a8a" text-anchor="middle">?</text></g><path d="M512.6 61.2V57Q512.6 56 513.6 56H532.8Q533.8 56 533.8 57V61.2Z" fill="#d8d8d8" stroke="#8a8a8a" stroke-width="0.9"/><rect x="514.4" y="53.4" width="17.4" height="8" fill="#fafafa" stroke="#8e8e8e" stroke-width="0.9"/><rect x="509.4" y="61.4" width="27.2" height="13.2" rx="1.6" fill="url(#gGr2)" stroke="#8a8a8a" stroke-width="0.9"/><path d="M510.4 65.4H535.8" stroke="#fff" stroke-width="0.8" opacity="0.7"/><rect x="511" y="63.6" width="1.2" height="1" fill="#888"/><rect x="513" y="63.6" width="2" height="1" fill="#888"/><path d="M512.6 74.6V69.6Q512.6 68.6 513.6 68.6H532.4Q533.4 68.6 533.4 69.6V74.6" fill="#bcbcbc" stroke="#7c7c7c" stroke-width="0.9"/><rect x="514.4" y="70.6" width="17" height="9" fill="#fbfbfb" stroke="#8e8e8e" stroke-width="0.9"/><path d="M514.4 71.2H531.4" stroke="#8a8a8a" stroke-width="1.2"/><path d="M516.4 74.4H529.8M516.4 76.6H523" stroke="#9a9a9a" stroke-width="0.9"/><rect x="810.4" y="53.4" width="27" height="26" rx="2" fill="#f6f6f6" stroke="#6e6e6e" stroke-width="1"/><rect x="811.6" y="54.6" width="24.6" height="23.6" rx="1" fill="none" stroke="#d0d0d0" stroke-width="0.8"/><rect x="813.4" y="56.2" width="21.2" height="5" rx="0.6" fill="#bfe6fb" stroke="#2a86cc" stroke-width="0.9"/><path d="M830.2 59.4H833" stroke="#2a6cb0" stroke-width="0.8"/><rect x="813.4" y="63.4" width="4.4" height="3.4" rx="0.7" fill="#7a7a7a" stroke="#4c4c4c" stroke-width="0.6"/><rect x="813.4" y="68.4" width="4.4" height="3.4" rx="0.7" fill="#7a7a7a" stroke="#4c4c4c" stroke-width="0.6"/><rect x="813.4" y="73.4" width="4.4" height="3.4" rx="0.7" fill="#7a7a7a" stroke="#4c4c4c" stroke-width="0.6"/><rect x="819.3" y="63.4" width="4.4" height="3.4" rx="0.7" fill="#7a7a7a" stroke="#4c4c4c" stroke-width="0.6"/><rect x="819.3" y="68.4" width="4.4" height="3.4" rx="0.7" fill="#7a7a7a" stroke="#4c4c4c" stroke-width="0.6"/><rect x="819.3" y="73.4" width="4.4" height="3.4" rx="0.7" fill="#7a7a7a" stroke="#4c4c4c" stroke-width="0.6"/><rect x="825.2" y="63.4" width="4.4" height="3.4" rx="0.7" fill="#7a7a7a" stroke="#4c4c4c" stroke-width="0.6"/><rect x="825.2" y="68.4" width="4.4" height="3.4" rx="0.7" fill="#7a7a7a" stroke="#4c4c4c" stroke-width="0.6"/><rect x="825.2" y="73.4" width="4.4" height="3.4" rx="0.7" fill="#7a7a7a" stroke="#4c4c4c" stroke-width="0.6"/><rect x="831.2" y="63.4" width="3.6" height="3.4" rx="0.8" fill="#ea3c28" stroke="#b02414" stroke-width="0.6"/><rect x="831.2" y="68.4" width="3.6" height="8.4" rx="0.8" fill="#8a8a8a" stroke="#4c4c4c" stroke-width="0.6"/><rect x="887.4" y="53.4" width="6.6" height="6.4" rx="1.4" fill="#5a9cf0" stroke="#2a66c8" stroke-width="0.9"/><path d="M896.4 56.0Q898.6 54.0 900.8 56.6T905.4 56.6T910 56.6T914.6 57.0" fill="none" stroke="#2a72d4" stroke-width="1.1"/><rect x="887.4" y="63.6" width="6.6" height="6.4" rx="1.4" fill="#fbd25a" stroke="#e89a28" stroke-width="0.9"/><path d="M896.4 66.2Q898.6 64.2 900.8 66.8T905.4 66.8T910 66.8T914.6 67.2" fill="none" stroke="#e8964a" stroke-width="1.1"/><rect x="887.4" y="73.4" width="6.6" height="6.4" rx="1.4" fill="#7ed460" stroke="#3a9028" stroke-width="0.9"/><path d="M896.4 76.00000000000001Q898.6 74.00000000000001 900.8 76.60000000000001T905.4 76.60000000000001T910 76.60000000000001T914.6 77.00000000000001" fill="none" stroke="#388a30" stroke-width="1.1"/><path d="M938.6 61.6L948.6 53.8L958.6 61.6V73.6H938.6Z" fill="url(#gEnv)" stroke="#e08a1c" stroke-width="0.9"/><rect x="941.6" y="56.8" width="14" height="9.6" fill="#f8f8f8" stroke="#8a8a8a" stroke-width="0.8"/><path d="M944 59.4H952.6M944 61.2H953.6M944 63H950" stroke="#909090" stroke-width="0.8"/><path d="M938.6 62.6L948.6 68.6L958.6 62.6V73.6H938.6Z" fill="#fbd468" stroke="#e6981e" stroke-width="0.8"/><path d="M938.8 73.4L948.6 66.6L958.4 73.4" fill="#fde9a0" stroke="#e6a02a" stroke-width="0.7"/><path d="M943.6 74.4C950 79.6 957.6 77 961.2 70.6L963.4 72.6L965.8 65.6L958.6 66L960.2 68.2C957.6 72.6 951.6 76 946 73Z" fill="url(#gBlueA)" stroke="#1a58c8" stroke-width="0.7"/><circle cx="1001.6" cy="65.6" r="12.2" fill="url(#gGlobe)" stroke="#1e6cc4" stroke-width="0.8"/><path d="M994.6 56.6C997 54.4 1000 54.2 1001.4 55.6C1000 57.6 998.6 57.4 997.6 59.4C996.6 61.4 994 62 992.6 60.6C992.8 59 993.6 57.6 994.6 56.600Z" fill="#58c028"/><path d="M1006.4 54.8C1009.6 56.2 1012.4 59.6 1013 63C1011 62.600 1008.6 60.4 1007.6 58Z" fill="#58c028"/><path d="M997.6 66.600C1000 64.4 1003.600 65.600 1004.400 67.800C1003 70.600 1001.600 72 1000.600 75.400C999 76 997.800 73 997.400 70.600Z" fill="#62c830"/><path d="M992.400 78.400C988.600 76.400 991 71.600 1001.600 60.200L999.400 58.400L1005.600 56.600L1004.600 62.800L1002.800 61.400C994 71.600 991.400 75.400 993.600 77Z" fill="#f0f0f0" stroke="#5c6470" stroke-width="0.8"/><path d="M1006.800 65.200H1013V72.600H1016.800L1009.900 79.400L1003 72.600H1006.800Z" fill="url(#gTeal)" stroke="#109098" stroke-width="0.8"/><path d="M1050.600 59.600C1050 54 1056 52.600 1059.400 57.600" fill="none" stroke="#7c8288" stroke-width="1"/><path d="M1046.200 63.400A3.600 4.600 0 1 1 1052.600 66.400V78L1051 79.600L1049.400 78V76.400L1050.400 75.400L1049.400 74.400V66.400A3.600 4.600 0 0 1 1046.200 63.400Z" fill="#eceef0" stroke="#7a8088" stroke-width="0.8"/><path d="M1051.800 63.400A3.600 4.600 0 1 1 1058.200 66.400V78L1056.600 79.600L1055 78V76.400L1056 75.400L1055 74.400V66.400A3.600 4.600 0 0 1 1051.800 63.400Z" fill="#f2f3f4" stroke="#7a8088" stroke-width="0.8"/><circle cx="1059.800" cy="62.800" r="3.400" fill="none" stroke="url(#gGold)" stroke-width="2.600"/><circle cx="1059.800" cy="62.800" r="4.800" fill="none" stroke="#e08a10" stroke-width="0.600"/><path d="M1062.600 65.600L1071.400 72.400L1070.600 74.600L1068.600 74.400L1068 72.800L1066.400 72.800L1061.400 67.800Z" fill="url(#gGold)" stroke="#e08a10" stroke-width="0.700"/><circle cx="1109" cy="65.600" r="13.200" fill="url(#gHelp)" stroke="#1c64e2" stroke-width="1.500"/><circle cx="1109" cy="65.600" r="12" fill="none" stroke="#9ccbff" stroke-width="0.700" opacity="0.8"/><path d="M1104.600 61.400C1104.600 56.600 1113.600 56.600 1113.600 61.400C1113.600 64.800 1109.200 65.200 1109.200 69.200" fill="none" stroke="#1c5cd8" stroke-width="4" stroke-linecap="round"/><path d="M1104.600 61.400C1104.600 56.600 1113.600 56.600 1113.600 61.400C1113.600 64.800 1109.200 65.200 1109.200 69.200" fill="none" stroke="#fff" stroke-width="2.100" stroke-linecap="round"/><circle cx="1109.200" cy="73.800" r="2.200" fill="#1c5cd8"/><circle cx="1109.200" cy="73.800" r="1.200" fill="#fff"/><path d="M1342.400 188.400H1355.600L1358 192V195.800H1344.600L1342.400 193.400Z" fill="#4a78dc" stroke="#2a2ad8" stroke-width="0.800"/><path d="M1343.600 189.400H1354.800L1356.600 191.800H1345.400Z" fill="#8fb6d8"/><path d="M1342.400 193.400L1344.600 195.800H1358" fill="none" stroke="#000" stroke-width="1.300"/><path d="M1345.400 191.800L1346.600 188.200L1353.600 181L1356.400 183.600L1349.400 190.800Z" fill="#ffee00" stroke="#222" stroke-width="0.700" stroke-dasharray="1 0.600"/><path d="M1348.200 189.600L1355.200 182.400L1356.400 183.600L1349.400 190.800Z" fill="#f8a000"/><path d="M1353.600 181L1354.800 179.800Q1356 179.200 1357 180.400Q1358 181.600 1357.400 182.600L1356.400 183.600Z" fill="#f07890" stroke="#502050" stroke-width="0.600"/><path d="M1345.400 191.800L1346.200 189.400L1347.800 191Z" fill="#222"/></svg>
</body></html>
